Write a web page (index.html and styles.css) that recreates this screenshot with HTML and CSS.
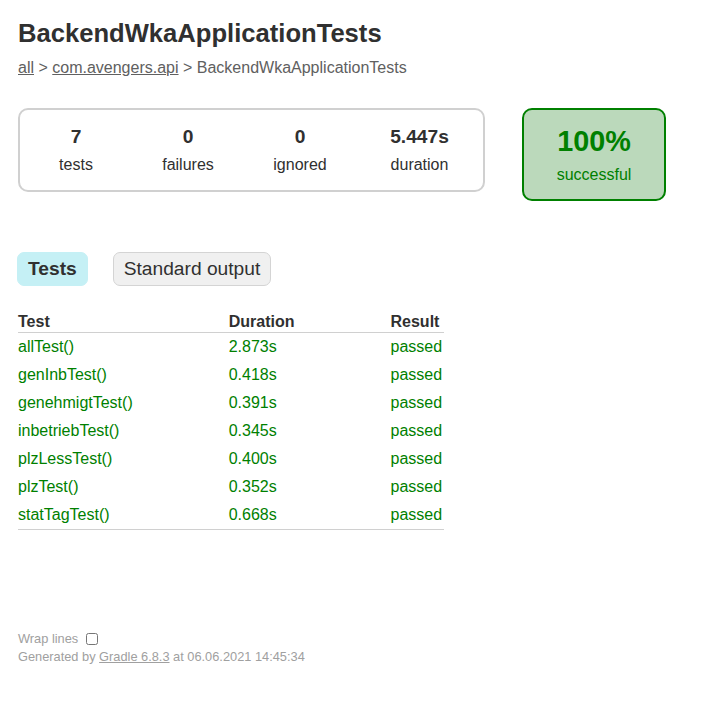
FILE: index.html
```html
<!DOCTYPE html>
<html>
<head>
<meta charset="utf-8">
<title>Test results - BackendWkaApplicationTests</title>
<link rel="stylesheet" href="styles.css">
</head>
<body>
<div class="content">
  <h1 class="title">BackendWkaApplicationTests</h1>
  <div class="breadcrumbs">
    <a href="#">all</a> &gt; <a href="#">com.avengers.api</a> &gt; BackendWkaApplicationTests
  </div>

  <div class="summary">
    <div class="summary-group">
      <div class="info-box">
        <div class="counter">7</div>
        <p>tests</p>
      </div>
      <div class="info-box">
        <div class="counter">0</div>
        <p>failures</p>
      </div>
      <div class="info-box">
        <div class="counter">0</div>
        <p>ignored</p>
      </div>
      <div class="info-box info-box-duration">
        <div class="counter">5.447s</div>
        <p>duration</p>
      </div>
    </div>
    <div class="info-box success-rate">
      <div class="percent">100%</div>
      <p>successful</p>
    </div>
  </div>

  <ul class="tab-links">
    <li class="tab-link selected"><h2>Tests</h2></li>
    <li class="tab-link"><a href="#">Standard output</a></li>
  </ul>

  <div class="tab">
    <table class="results">
      <thead>
        <tr>
          <th>Test</th>
          <th>Duration</th>
          <th>Result</th>
        </tr>
      </thead>
      <tbody>
        <tr class="success"><td>allTest()</td><td>2.873s</td><td>passed</td></tr>
        <tr class="success"><td>genInbTest()</td><td>0.418s</td><td>passed</td></tr>
        <tr class="success"><td>genehmigtTest()</td><td>0.391s</td><td>passed</td></tr>
        <tr class="success"><td>inbetriebTest()</td><td>0.345s</td><td>passed</td></tr>
        <tr class="success"><td>plzLessTest()</td><td>0.400s</td><td>passed</td></tr>
        <tr class="success"><td>plzTest()</td><td>0.352s</td><td>passed</td></tr>
        <tr class="success"><td>statTagTest()</td><td>0.668s</td><td>passed</td></tr>
      </tbody>
    </table>
  </div>

  <div class="footer">
    <div class="wrap-row">
      <label for="wrap-toggle" class="wrap-label">Wrap lines</label><input id="wrap-toggle" class="wrap-toggle" type="checkbox">
    </div>
    <div>Generated by <a href="#">Gradle 6.8.3</a> at 06.06.2021 14:45:34</div>
  </div>
</div>
</body>
</html>
```

FILE: styles.css
```css
html, body {
  margin: 0;
  padding: 0;
  background: #ffffff;
}

body {
  font-family: "Liberation Sans", Arial, sans-serif;
  font-size: 16px;
  color: #303030;
}

a, a:visited {
  color: #303030;
}

.content {
  padding: 19px 18px 30px 18px;
}

.title {
  font-size: 25.6px;
  font-weight: bold;
  margin: 0 0 11px 0;
  white-space: nowrap;
}

.breadcrumbs, .breadcrumbs a {
  color: #606060;
}

.summary {
  margin-top: 31px;
  display: flex;
  align-items: flex-start;
}

.summary-group {
  display: flex;
  border: 2px solid #d0d0d0;
  border-radius: 10px;
}

.info-box {
  width: 110px;
  margin: 1px;
  padding: 15px 0;
  text-align: center;
}

.info-box p {
  margin: 0;
}

.info-box-duration {
  width: 125px;
}

.counter, .percent {
  font-size: 19.2px;
  font-weight: bold;
  margin-bottom: 8px;
}

.success-rate {
  width: 140px;
  margin: 0 0 0 37px;
  border: 2px solid #008000;
  border-radius: 10px;
  background-color: #bbd9bb;
  color: #008000;
}

.success-rate .percent {
  font-size: 28.8px;
}

.tab-links {
  list-style: none;
  margin: 41px 0 16px -1px;
  padding: 10px 0;
  display: flex;
  gap: 25px;
}

.tab-link {
  padding: 5px 10px;
  border: 1px solid #d4d4d4;
  border-radius: 7px;
  background-color: #f0f0f0;
  font-size: 19.2px;
  line-height: 22px;
}

.tab-link.selected {
  background-color: #c5f0f5;
  border-color: #c5f0f5;
}

.tab-link h2 {
  margin: 0;
  padding: 0;
  font-size: 19.2px;
  line-height: 22px;
}

.tab-link a {
  text-decoration: none;
  display: block;
}

.results {
  border-collapse: collapse;
  border-bottom: 1px solid #d0d0d0;
}

.results th {
  text-align: left;
  white-space: nowrap;
  padding: 1px 0 1px 6em;
  border-bottom: 1px solid #d0d0d0;
}

.results td {
  white-space: nowrap;
  padding: 5px 0 5px 6em;
}

.results th:first-child,
.results td:first-child {
  padding-left: 0;
}

.results th:last-child,
.results td:last-child {
  padding-right: 2px;
}

.success td {
  color: #008000;
}

.footer {
  margin-top: 97px;
  font-size: 12.8px;
  color: #a0a0a0;
  white-space: nowrap;
}

.footer a {
  color: #a0a0a0;
}

.wrap-row {
  height: 22px;
  display: flex;
  align-items: center;
}

.wrap-toggle {
  margin: 1px 0 0 8px;
  width: 12px;
  height: 12px;
}
```
